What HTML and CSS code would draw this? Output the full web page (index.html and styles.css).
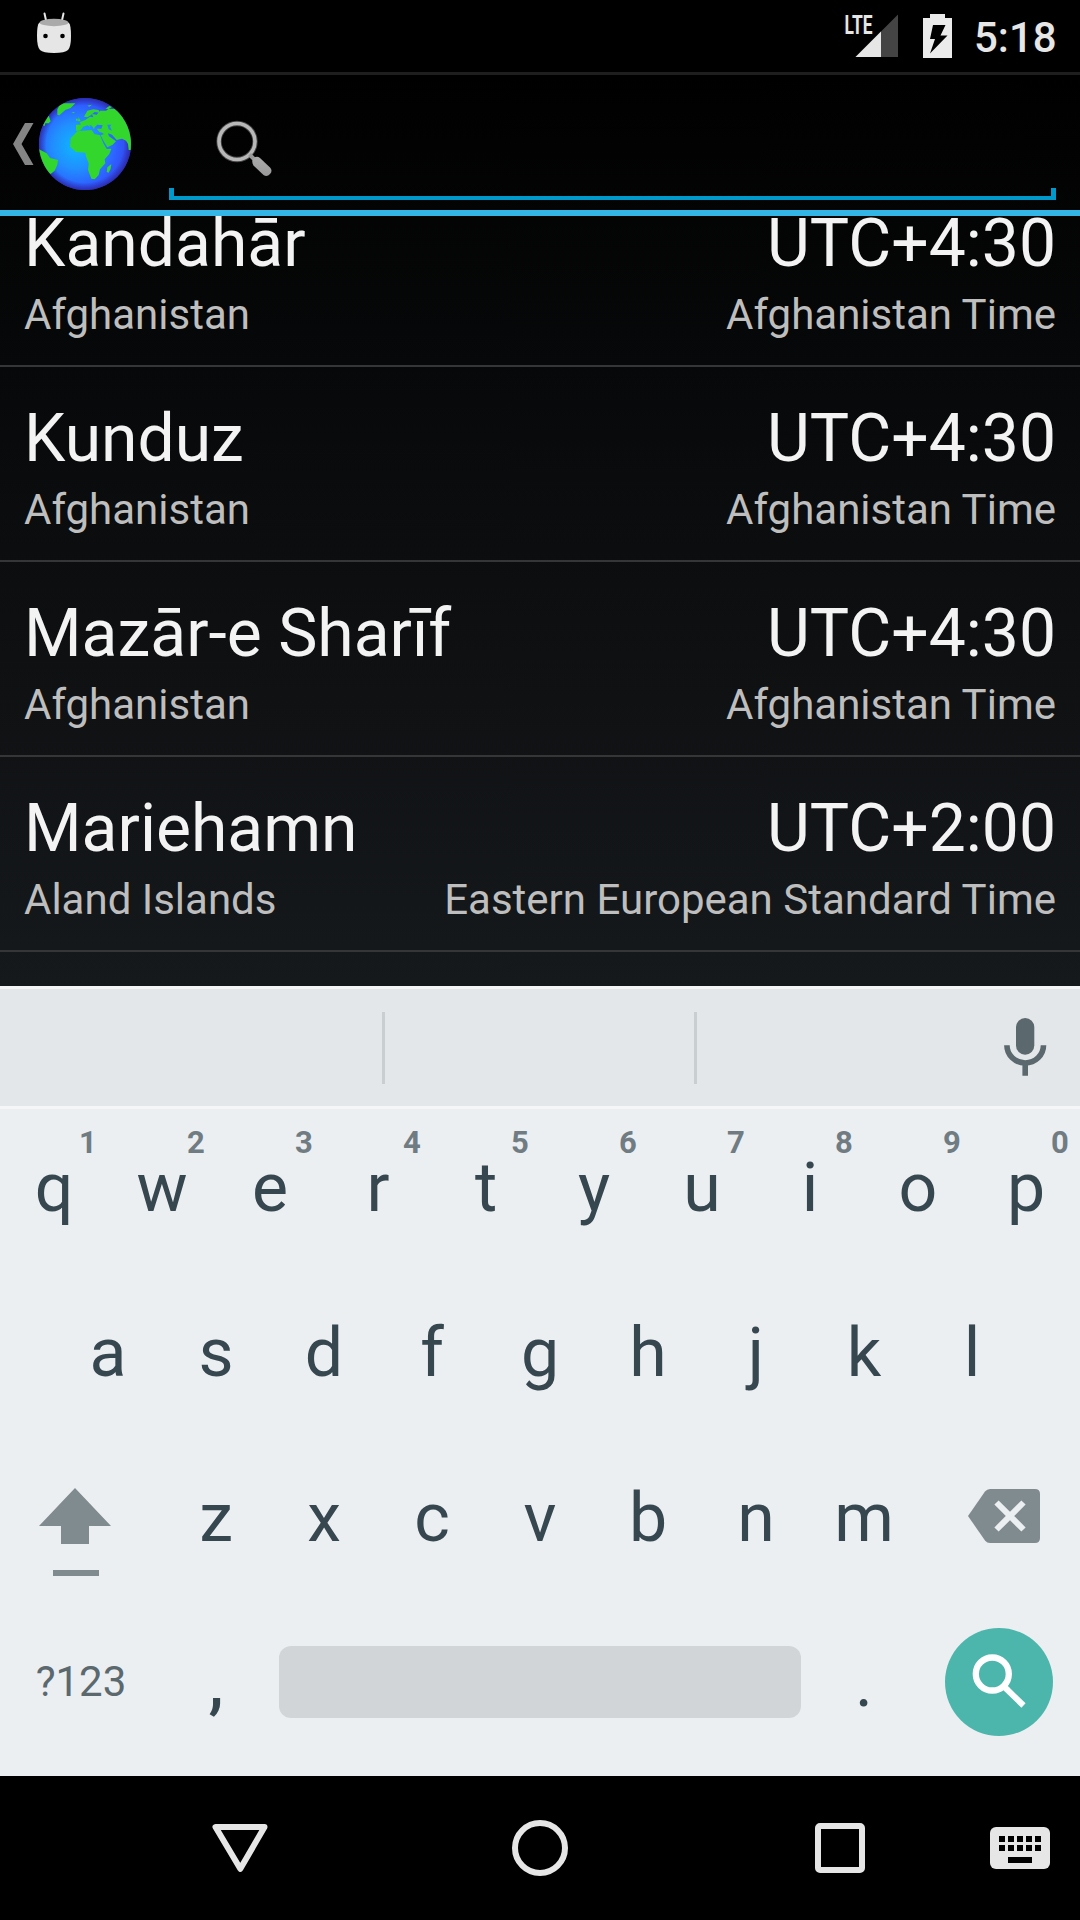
FILE: index.html
```html
<!DOCTYPE html>
<html lang="en">
<head>
<meta charset="utf-8">
<title>Select city</title>
<link rel="stylesheet" href="styles.css">
</head>
<body>
<div class="screen">
  <header class="status">
    <svg class="status-robot" width="36" height="42" viewBox="36 12 36 42">
      <path d="M44.5 13.5l2 9M63.500 13.500l-2 9" stroke="#e6e6e6" stroke-width="2" stroke-linecap="round"/>
      <path d="M39 23q15-6 30 0q2 2 2 13q0 11-3 14q-3 3-14 3t-14-3q-3-3-3-14q0-11 2-13z" fill="#e6e6e6"/>
      <ellipse cx="54" cy="22.500" rx="14.500" ry="3.700" fill="#aaa"/>
      <circle cx="45.500" cy="36" r="2.300"/><circle cx="62.500" cy="36" r="2.300"/>
    </svg>
    <div class="status-right">
      <svg class="signal" width="60" height="58" viewBox="840 1 60 58">
        <path d="M855.500 57L898 57V14.500z" fill="#444"/>
        <path d="M855.500 57H881V31.500z" fill="#e6e6e6"/>
        <text class="lte" x="844.500" y="33.500" textLength="28" lengthAdjust="spacingAndGlyphs">LTE</text>
      </svg>
      <svg class="battery" width="30" height="46" viewBox="923 13 30 46">
        <path d="M930 14h15v4h7v40h-29V18h7z" fill="#ebebeb"/>
        <path d="M933 25h12.500l-5 10.500h7L930 53.500l5-14.500h-5z"/>
      </svg>
      <span class="clock">5:18</span>
    </div>
  </header>

  <main class="app">
    <div class="actionbar">
      <svg class="up" width="22" height="44" viewBox="12 122 22 44"><path d="M25 123h8.500L21.500 144l12 21H25L13 144z" fill="#858585"/></svg>
      <svg class="globe" width="94" height="94" viewBox="38 97 94 94">
        <defs>
          <radialGradient id="sea" cx="76" cy="146" r="56" gradientUnits="userSpaceOnUse">
            <stop offset="0" stop-color="#0cb8ff"/><stop offset=".4" stop-color="#2090ff"/><stop offset=".75" stop-color="#2f5cff"/><stop offset="1" stop-color="#3346e0"/>
          </radialGradient>
          <radialGradient id="rim" cx="85" cy="144" r="46" gradientUnits="userSpaceOnUse">
            <stop offset=".84" stop-color="#2b1f9c" stop-opacity="0"/><stop offset="1" stop-color="#2b1f9c" stop-opacity=".75"/>
          </radialGradient>
          <clipPath id="disc"><circle cx="85" cy="144" r="46"/></clipPath>
        </defs>
        <circle cx="85" cy="144" r="46" fill="url(#sea)"/>
        <circle cx="85" cy="144" r="46" fill="url(#rim)"/>
        <g clip-path="url(#disc)">
          <g transform="scale(.33333)" fill="#32d62d">
            <path d="M232 394L275 390 283 402 300 406 310 430 320 447 334 446 328 462 314 478 316 490 300 508 296 525 284 538 274 536 264 510 266 490 258 470 256 458 228 456 210 440 212 415 222 404z"/>
            <path d="M302 406L312 402 326 408 348 424 338 434 322 442 312 425z"/>
            <path d="M228 392V374H242L240 366 256 360 270 350 280 352 276 342 290 344 300 332 318 332 326 326 344 326 364 340 384 370 396 410 396 450 386 450 384 432 378 422 366 416 350 420 336 404 324 400 328 414 306 398 298 396 290 386 304 386 308 376 292 374 284 382 282 388 276 378 268 374 272 382 262 376 250 380 240 392z"/>
            <path d="M252 350L262 332 280 328 296 330 298 338 284 336 272 346 262 352z"/>
            <path d="M234 364L236 352 242 364zM228 362h5v-6h-5zM262 317l14-3-8 6zM316 326l12-8 8 3-10 6zM214 336l10 0-2 4z"/>
            <path d="M172 344L172 328 182 310 226 310 212 324 196 330 178 346z"/>
            <path d="M114 446L140 460 150 474 174 480 172 494 164 512 152 522 130 510 114 460z"/>
            <path d="M128 376L146 346 152 364 146 370 136 370 134 378z"/>
            <path d="M320 516L322 502 334 492 332 506 326 518z"/>
            <path d="M322 374L334 374 330 380 336 392 326 388z" fill="#2688ff"/>
          </g>
        </g>
      </svg>
      <div class="search">
        <svg class="search-glyph" width="60" height="60" viewBox="214 119 60 60">
          <defs><linearGradient id="metal" x1="0" y1="0" x2="0" y2="1"><stop offset="0" stop-color="#aaa"/><stop offset="1" stop-color="#999"/></linearGradient></defs>
          <circle cx="237" cy="141.500" r="18" fill="none" stroke="#444" stroke-width="5.400"/>
          <circle cx="237" cy="141.500" r="18" fill="none" stroke="#b8b8b8" stroke-width="3.600"/>
          <path d="M249.500 154.500l6 6" stroke="#999" stroke-width="4"/>
          <path d="M253.500 158.500q3-3 6.500-.5l10 9.500q3 3 0 6.500t-6.500 1l-10-9.500q-2.500-4 0-7z" fill="url(#metal)"/>
        </svg>
      </div>
    </div>

    <ul class="cities">
      <li class="city"><div class="line primary"><span>Kandahār</span><span>UTC+4:30</span></div><div class="line secondary"><span>Afghanistan</span><span>Afghanistan Time</span></div></li>
      <li class="city"><div class="line primary"><span>Kunduz</span><span>UTC+4:30</span></div><div class="line secondary"><span>Afghanistan</span><span>Afghanistan Time</span></div></li>
      <li class="city"><div class="line primary"><span>Mazār-e Sharīf</span><span>UTC+4:30</span></div><div class="line secondary"><span>Afghanistan</span><span>Afghanistan Time</span></div></li>
      <li class="city"><div class="line primary"><span>Mariehamn</span><span>UTC+2:00</span></div><div class="line secondary"><span>Aland Islands</span><span>Eastern European Standard Time</span></div></li>
    </ul>
  </main>

  <section class="keyboard">
    <div class="suggestions">
      <span class="slot slot-first"></span><span class="slot slot-mid"></span>
      <svg class="mic" width="44" height="60" viewBox="1003 1017 44 60">
        <rect x="1016" y="1018" width="18.300" height="36.700" rx="9.100" fill="#5b686e"/>
        <path d="M1006.900 1045.300a18.300 17.700 0 0 0 36.600 0M1025.200 1063v12.700" fill="none" stroke="#5b686e" stroke-width="5.600"/>
      </svg>
    </div>
    <div class="row row-top">
      <span class="key">q<sup>1</sup></span><span class="key">w<sup>2</sup></span><span class="key">e<sup>3</sup></span><span class="key">r<sup>4</sup></span><span class="key">t<sup>5</sup></span><span class="key">y<sup>6</sup></span><span class="key">u<sup>7</sup></span><span class="key">i<sup>8</sup></span><span class="key">o<sup>9</sup></span><span class="key">p<sup>0</sup></span>
    </div>
    <div class="row">
      <span class="key">a</span><span class="key">s</span><span class="key">d</span><span class="key">f</span><span class="key">g</span><span class="key">h</span><span class="key">j</span><span class="key">k</span><span class="key">l</span>
    </div>
    <div class="row">
      <span class="key wide">
        <svg width="162" height="100" viewBox="0 1486 162 100"><path d="M75 1488l36 38H89v18H61v-18H39zM53 1570h46v6H53z" fill="#808b90"/></svg>
      </span>
      <span class="key">z</span><span class="key">x</span><span class="key">c</span><span class="key">v</span><span class="key">b</span><span class="key">n</span><span class="key">m</span>
      <span class="key wide">
        <svg width="162" height="100" viewBox="918 1486 162 100"><path d="M968 1516l17-24.500q2-2.500 5-2.500h45q5 0 5 5v44q0 5-5 5h-45q-3 0-5-2.500z" fill="#808b90"/><path d="M996.500 1502.500l27 27m0-27l-27 27" stroke="#ebeff2" stroke-width="6"/></svg>
      </span>
    </div>
    <div class="row row-bottom">
      <span class="key wide symbols">?123</span>
      <span class="key punct comma">,</span>
      <span class="key space"></span>
      <span class="key punct">.</span>
      <span class="key wide">
        <span class="go"><svg width="108" height="108" viewBox="945 1628 108 108"><circle cx="992.300" cy="1674" r="16.500" fill="none" stroke="#fff" stroke-width="6.300"/><path d="M1005 1687.500l18.500 18" stroke="#fff" stroke-width="6"/><circle cx="1007.500" cy="1689.500" r="2.600" fill="#fff"/></svg></span>
      </span>
    </div>
  </section>

  <nav class="navbar">
    <svg class="nav-back" width="56" height="50" viewBox="212 1823 56 50"><path d="M215.500 1827h49L240.300 1868.800z" fill="none" stroke="#e6e6e6" stroke-width="6" stroke-linejoin="round"/></svg>
    <span class="nav-home"></span>
    <span class="nav-recent"></span>
    <svg class="nav-ime" width="60" height="42" viewBox="0 0 60 42"><rect width="60" height="42" rx="6" fill="#e6e6e6"/><path d="M9 12h42M9 21h42" stroke="#000" stroke-width="6" stroke-dasharray="6 3"/><path d="M18 30h24v6H18z"/></svg>
  </nav>
</div>
</body>
</html>
```
FILE: styles.css
```css
*, *::before, *::after { box-sizing: border-box; }
body { margin: 0; background: #000; font-family: Roboto, "Noto Sans", sans-serif; }
svg { display: block; flex: none; }
.screen { width: 1080px; height: 1920px; display: flex; flex-direction: column; overflow: hidden; }

.status { height: 72px; flex: none; display: flex; justify-content: space-between; align-items: flex-start; padding: 0 25px 0 36px; background: #000; }
.status-robot { margin-top: 12px; }
.status-right { display: flex; align-items: flex-start; }
.signal { margin-top: 1px; }
.lte { font: 700 26px "Liberation Sans Narrow", Roboto, sans-serif; fill: #e6e6e6; }
.battery { margin: 13px 0 0 23px; }
.clock { margin: 13px 0 0 21px; width: 81px; text-align: right; color: #e6e6e6; font-size: 42px; font-weight: 500; line-height: 49px; }

.app { height: 914px; flex: none; overflow: hidden; background: linear-gradient(#000, #16191c); }
.actionbar { height: 144px; border-top: 3px solid #1e1e1e; border-bottom: 6px solid #33b5e5; display: flex; padding: 0 24px 0 12px; align-items: center; }
.up { margin-top: 3px; }
.globe { margin: 3px 0 0 4px; }
.search { margin: 0 0 0 37px; flex: 1; height: 135px; padding: 44px 0 0 45px; display: flex; flex-direction: column; justify-content: space-between; }
.search::after { content: ""; height: 12px; margin: 0 0 10px -45px; border: solid #0099cc; border-width: 0 5px 4px; }

.cities { list-style: none; margin: -44px 0 0; padding: 0; clip-path: inset(44px 0 -100px 0); }
.city { height: 195px; padding: 33px 24px 0; border-bottom: 2px solid #343638; }
.line { display: flex; justify-content: space-between; white-space: nowrap; }
.primary { font-size: 66px; line-height: 78px; color: #f3f3f3; }
.secondary { margin-top: 7px; font-size: 42px; line-height: 50px; color: #bebebe; }

.keyboard { height: 790px; flex: none; background: #ebeff2; border-top: 3px solid #f3f5f6; color: #37474f; }
.suggestions { height: 120px; background: #e3e7ea; border-bottom: 3px solid #f4f6f8; display: flex; align-items: center; }
.slot { height: 72px; border-right: 3px solid #c9ced1; margin-top: 1px; }
.slot-first { width: 385px; }
.slot-mid { width: 312px; }
.mic { margin: 0 33px 1px auto; }
.row { height: 165px; display: flex; justify-content: center; }
.row-top { height: 158px; margin-bottom: 3px; }
.row-bottom { height: 164px; }
.key { width: 108px; position: relative; display: flex; align-items: center; justify-content: center; font-size: 68px; line-height: 80px; }
.key sup { position: absolute; top: 16px; left: 68px; width: 40px; text-align: center; font-size: 31px; font-weight: 700; line-height: 36px; color: #707c82; }
.wide { width: 162px; }
.wide > svg { margin-top: 37px; }
.symbols { font-size: 42px; color: #5b696f; }
.punct { padding-top: 2px; }
.comma { font-weight: 500; }
.space { width: 540px; padding: 0 9px; }
.space::before { content: ""; width: 100%; height: 72px; border-radius: 12px; background: #d1d5d8; }
.go { width: 108px; height: 108px; border-radius: 50%; background: #4db6ac; }

.navbar { height: 144px; flex: none; background: #000; display: flex; align-items: center; padding: 0 30px 0 212px; }
.nav-home { width: 56px; height: 56px; border: 6px solid #e6e6e6; border-radius: 50%; margin-left: 244px; }
.nav-recent { width: 50px; height: 50px; border: 6px solid #e6e6e6; border-radius: 5px; margin-left: 247px; }
.nav-ime { margin-left: 125px; }
```
